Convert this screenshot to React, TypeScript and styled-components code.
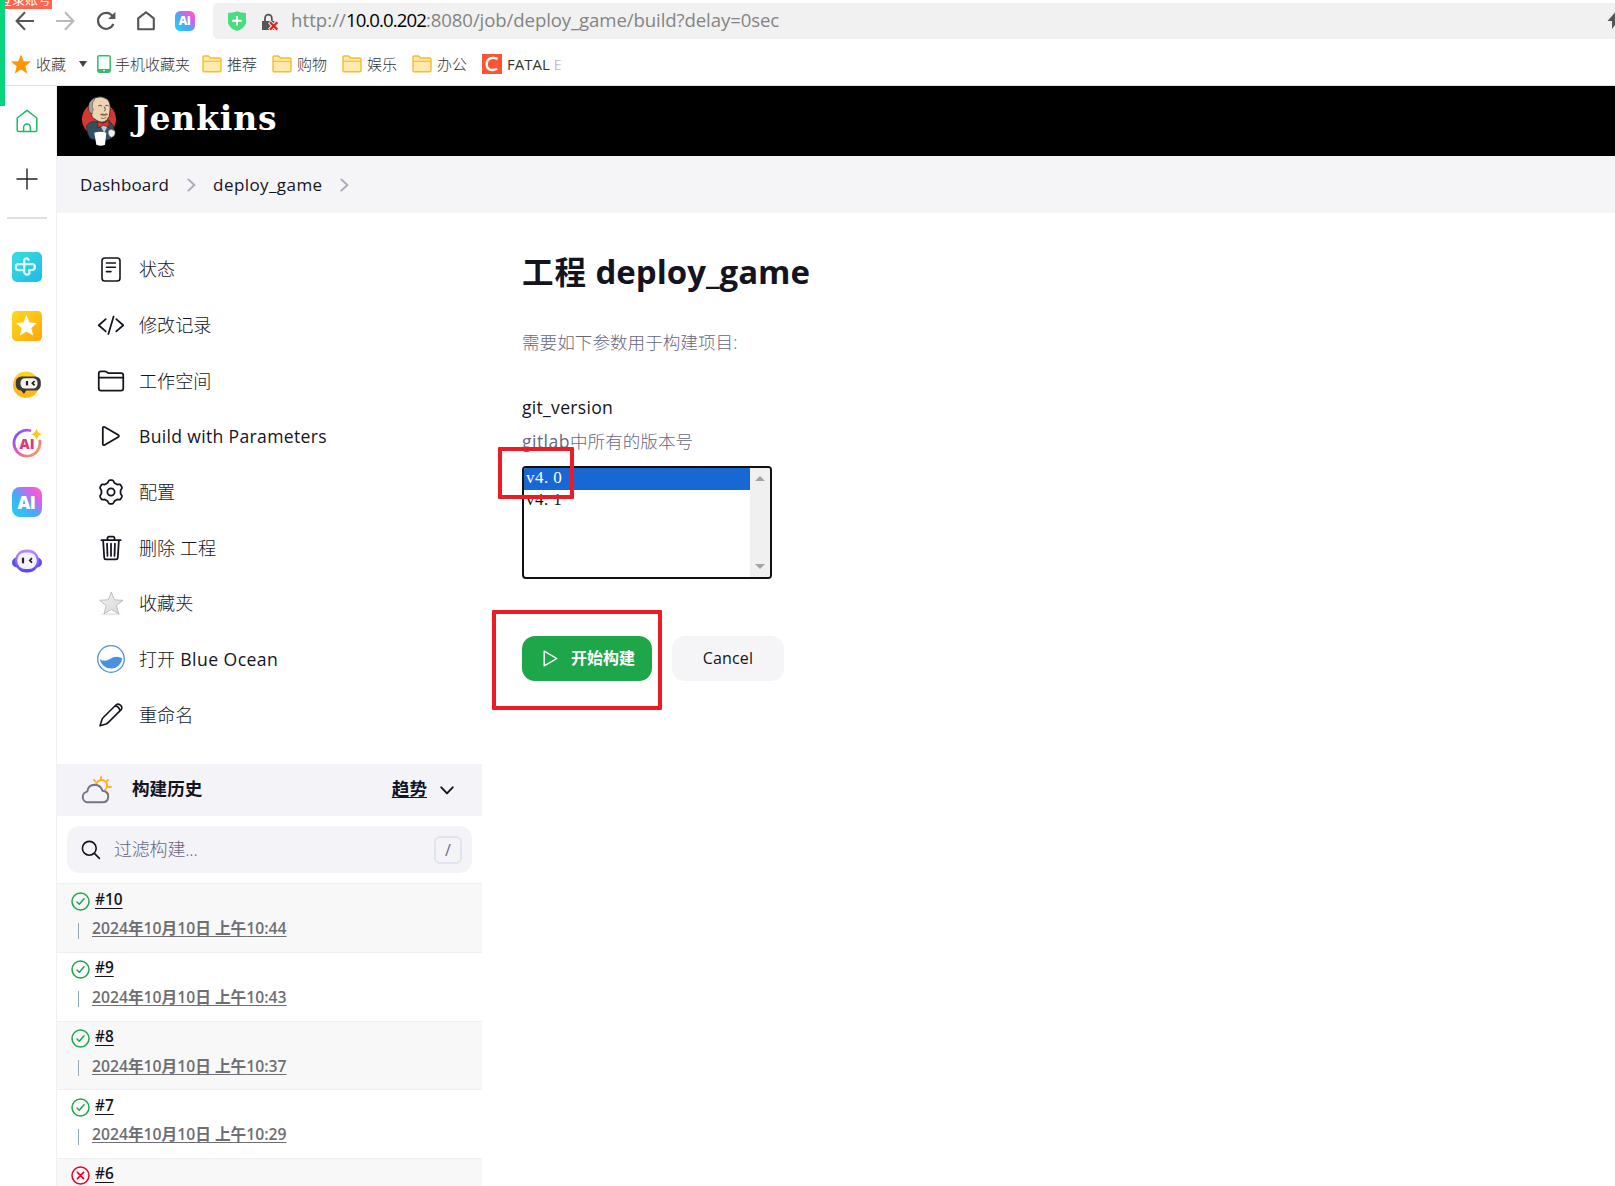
import React from 'react';
import styled, { createGlobalStyle } from 'styled-components';

const latin = '"Open Sans", "Noto Sans"';
const cjk = '"Noto Sans CJK SC"';

const Global = createGlobalStyle`
  * { box-sizing: border-box; }
  body { margin: 0; background: #fff; overflow: hidden; font-family: ${latin}, ${cjk}, sans-serif; color: #14141f; }
  svg { display: block; flex: none; }
`;

const Page = styled.div`
  position: relative;
  display: flex;
  flex-direction: column;
  width: 1615px;
  height: 1186px;
  overflow: hidden;
`;

const T = styled.span<{ $s: number; $ls?: number; $w?: number; $c?: string }>`
  font-size: ${p => p.$s}px;
  letter-spacing: ${p => p.$ls ?? 0}px;
  font-weight: ${p => p.$w ?? 'inherit'};
  color: ${p => p.$c ?? 'inherit'};
  white-space: pre;
`;

/* browser chrome */
const Strip = styled.div`
  position: absolute;
  left: 0;
  top: 0;
  width: 5px;
  height: 106px;
  background: #08d47e;
`;
const LoginTag = styled.div`
  position: absolute;
  left: 0;
  top: -12px;
  width: 52px;
  height: 21px;
  background: #ff6650;
  color: #fff;
  font: 13px/21px ${cjk}, sans-serif;
  white-space: nowrap;
  text-indent: -1px;
`;
const Toolbar = styled.div`
  display: flex;
  flex: none;
  align-items: center;
  height: 42px;
  padding-left: 14px;
`;
const NavButtons = styled.div`
  display: flex;
  align-items: center;
  gap: 18.3px;
  width: 199px;
`;
const AddressBar = styled.div`
  display: flex;
  align-items: center;
  flex: 1;
  height: 36px;
  padding-left: 14px;
  background: #f1f1f1;
  border-radius: 5px 0 0 5px;
`;
const Url = styled.div`
  margin-left: 12px;
  flex: 1;
  height: 32px;
  line-height: 30px;
  color: #848484;
  white-space: nowrap;
`;
const Bookmarks = styled.div`
  display: flex;
  flex: none;
  align-items: center;
  height: 44px;
  padding: 1px 0 0 11px;
  border-bottom: 1px solid #e0e2e4;
  color: #333;
  font-family: ${latin}, ${cjk}, sans-serif;
`;
const Bookmark = styled.div<{ $w: number; $gap?: number }>`
  display: flex;
  align-items: center;
  gap: ${p => p.$gap ?? 5}px;
  width: ${p => p.$w}px;
  font-size: 15px;
  font-weight: 300;
  line-height: 22px;
  white-space: nowrap;
`;
const Faded = styled.span`
  background: linear-gradient(90deg, #aaa, #e4e4e4);
  background-clip: text;
  color: transparent;
`;

/* rail */
const Body = styled.div`
  display: flex;
  flex: 1;
  min-height: 0;
`;
const Rail = styled.div`
  display: flex;
  flex-direction: column;
  align-items: center;
  width: 57px;
  padding: 23px 3px 0 1px;
  border-right: 1px solid #f1f1f3;
`;
const RailIcon = styled.div<{ $h: number; $mt: number }>`
  display: flex;
  flex: none;
  align-items: center;
  justify-content: center;
  width: 30px;
  height: ${p => p.$h}px;
  margin-top: ${p => p.$mt}px;
`;
const RailLine = styled.div`
  width: 40px;
  height: 2px;
  margin: 27px 0 4px;
  background: #e0e0e0;
`;

/* jenkins */
const Site = styled.div`
  display: flex;
  flex-direction: column;
  flex: 1;
`;
const Header = styled.div`
  display: flex;
  flex: none;
  align-items: center;
  height: 70px;
  padding-left: 24px;
  background: #000;
`;
const Brand = styled.div`
  margin-left: 16px;
  font: bold 33px/40px "DejaVu Serif", serif;
  letter-spacing: 0.85px;
  color: #fff;
  padding-bottom: 5px;
`;
const Crumbs = styled.div`
  display: flex;
  flex: none;
  align-items: center;
  height: 57px;
  padding-left: 23px;
  background: #f5f5f8;
  font-size: 17px;
  line-height: 24px;
`;
const Chevron = styled.div<{ $l: number; $r: number }>`
  margin: 0 ${p => p.$r}px 0 ${p => p.$l}px;
`;
const Columns = styled.div`
  display: flex;
  flex: 1;
  min-height: 0;
`;
const Side = styled.div`
  display: flex;
  flex-direction: column;
  width: 425px;
  padding-top: 28.5px;
  overflow: hidden;
  & > * { flex: none; }
`;
const Task = styled.div`
  display: flex;
  align-items: center;
  height: 55.7px;
  padding-left: 40px;
  gap: 14px;
  font-size: 18.1px;
  font-weight: 300;
  line-height: 28px;
  white-space: pre;
`;
const IconBox = styled.div`
  display: flex;
  align-items: center;
  justify-content: center;
  width: 28px;
  height: 28px;
`;
const HistoryHead = styled.div`
  display: flex;
  align-items: center;
  height: 52px;
  margin-top: 21.7px;
  padding: 0 28px 0 24px;
  background: #f3f3f8;
  font: bold 17.6px/26px ${cjk}, sans-serif;
`;
const HistoryTitle = styled.div`
  flex: 1;
  margin-left: 20px;
  padding-bottom: 4px;
`;
const Trend = styled.div`
  margin-right: 13px;
  padding-bottom: 4px;
  text-decoration: underline;
  text-decoration-thickness: 1px;
  text-underline-offset: 2px;
`;
const Search = styled.div`
  display: flex;
  align-items: center;
  height: 47px;
  margin: 10px 10px 10px;
  padding: 0 10px 0 14px;
  background: #f3f3f8;
  border-radius: 13px;
`;
const Placeholder = styled.div`
  flex: 1;
  margin-left: 13px;
  padding-bottom: 1px;
  font: 300 18px/26px ${latin}, ${cjk}, sans-serif;
  letter-spacing: -0.2px;
  color: #67677f;
`;
const Key = styled.div`
  display: flex;
  align-items: center;
  justify-content: center;
  width: 28px;
  height: 28px;
  border: 2px solid #e3e3ee;
  border-radius: 6px;
  font-size: 16px;
  color: #6a6a85;
`;
const Build = styled.div<{ $odd: boolean }>`
  display: flex;
  flex-direction: column;
  height: 68.6px;
  padding: 2.5px 0 0 14px;
  border-top: 1px solid #efefef;
  background: ${p => (p.$odd ? '#f8f8f8' : '#fff')};
`;
const BuildTop = styled.div`
  display: flex;
  align-items: center;
  gap: 5px;
  height: 29px;
`;
const Num = styled.div`
  font-size: 15.4px;
  font-weight: 600;
  line-height: 24px;
  margin-top: -3px;
  text-decoration: underline;
  text-decoration-thickness: 1px;
  text-underline-offset: 3px;
`;
const BuildDate = styled.div`
  display: flex;
  align-items: center;
  height: 25px;
  margin-left: 7px;
  font-size: 15.7px;
  font-weight: 600;
  line-height: 24px;
  color: #6e6e73;
`;
const Tick = styled.div`
  width: 1px;
  height: 16px;
  margin: 5px 13px 0 0;
  background: #93a8b8;
`;
const DateText = styled.span`
  white-space: pre;
  text-decoration: underline;
  text-decoration-thickness: 1px;
  text-underline-offset: 2px;
`;

const Main = styled.div`
  display: flex;
  flex-direction: column;
  align-items: flex-start;
  flex: 1;
  padding: 38px 0 0 40px;
`;
const Title = styled.h1`
  margin: 0;
  height: 44px;
  font-size: 31.5px;
  font-weight: 700;
  line-height: 41px;
  letter-spacing: 0.9px;
  white-space: pre;
`;
const Intro = styled.div`
  height: 28px;
  margin-top: 34px;
  font-size: 17.6px;
  font-weight: 300;
  line-height: 27px;
  color: #67677f;
`;
const Label = styled.div`
  height: 28px;
  margin-top: 36px;
  line-height: 28px;
`;
const Hint = styled.div`
  height: 28px;
  margin-top: 6px;
  line-height: 28px;
  font-weight: 300;
  color: #67677f;
`;
const SelectWrap = styled.div`
  position: relative;
  margin-top: 11px;
`;
const Select = styled.div`
  display: flex;
  width: 250px;
  height: 113px;
  border: 2px solid #111;
  border-radius: 4px;
  overflow: hidden;
`;
const Options = styled.div`
  flex: 1;
`;
const Option = styled.div<{ $on?: boolean }>`
  height: 21.5px;
  padding-left: 2px;
  font: 17px/19px "Liberation Serif", serif;
  letter-spacing: 0.45px;
  color: ${p => (p.$on ? '#fff' : '#111')};
  background: ${p => (p.$on ? '#1967d2' : 'transparent')};
`;
const Scroll = styled.div`
  display: flex;
  flex-direction: column;
  align-items: center;
  justify-content: space-between;
  width: 20px;
  padding: 8px 0 8px;
  background: #f0f0f0;
`;
const Mark = styled.div<{ $x: number; $y: number; $w: number; $h: number }>`
  position: absolute;
  left: ${p => p.$x}px;
  top: ${p => p.$y}px;
  width: ${p => p.$w}px;
  height: ${p => p.$h}px;
  border: 4px solid #ed1c24;
  border-radius: 1px;
`;
const Actions = styled.div`
  position: relative;
  display: flex;
  gap: 20px;
  margin-top: 57px;
`;
const Button = styled.div<{ $primary?: boolean }>`
  display: flex;
  align-items: center;
  justify-content: center;
  gap: 13px;
  width: ${p => (p.$primary ? 130 : 112)}px;
  height: 45px;
  padding-left: ${p => (p.$primary ? 4 : 0)}px;
  border-radius: 13px;
  background: ${p => (p.$primary ? '#1ea64b' : '#f5f5f8')};
  color: ${p => (p.$primary ? '#fff' : '#14141f')};
  font-size: 16px;
  font-weight: ${p => (p.$primary ? 700 : 400)};
  letter-spacing: ${p => (p.$primary ? 0 : 0.15)}px;
`;
const ButtonText = styled.span<{ $lift: number }>`
  padding-bottom: ${p => p.$lift}px;
`;

const L = { fill: 'none', stroke: '#14141f', strokeWidth: 32, strokeLinecap: 'round' as const, strokeLinejoin: 'round' as const };
const Ion = ({ children, s = 28 }: { children: React.ReactNode; s?: number }) => (
  <svg width={s} height={s} viewBox="0 0 512 512" {...L}>{children}</svg>
);

const AiBadge = ({ s, id }: { s: number; id: string }) => (
  <svg width={s} height={s} viewBox="0 0 30 30">
    <defs>
      <linearGradient id={id} x1="0" y1="1" x2="1" y2="0">
        <stop offset="0" stopColor="#1fd3ee" />
        <stop offset=".45" stopColor="#4ba8f5" />
        <stop offset=".75" stopColor="#e45be8" />
        <stop offset="1" stopColor="#ff6bb0" />
      </linearGradient>
    </defs>
    <rect width="30" height="30" rx="8" fill={`url(#${id})`} />
    <text x="14.5" y="21.5" textAnchor="middle" fontFamily="Open Sans" fontWeight="800" fontSize="17.5" letterSpacing="-.5" fill="#fff">AI</text>
  </svg>
);

const Folder = () => (
  <svg width="20" height="18" viewBox="0 0 20 18">
    <path d="M1 15.5V2.2Q1 1 2.2 1H6.5L8.5 3H17.8Q19 3 19 4.2V15.5Q19 16.7 17.8 16.7H2.2Q1 16.7 1 15.5Z" fill="#ffe9ac" stroke="#f7bd2b" strokeWidth="1.4" />
    <path d="M1 6.3H19" stroke="#f7bd2b" strokeWidth="1.1" />
  </svg>
);

const Butler = () => (
  <svg width="36" height="50" viewBox="0 0 108 150">
    <circle cx="54" cy="70" r="51" fill="#d33833" />
    <path d="M16 90Q30 72 50 78L85 76Q100 86 100 102L94 118L90 128Q66 138 28 128L20 112Z" fill="#335061" stroke="#1c2830" strokeWidth="2" />
    <path d="M24 42Q20 14 42 5Q62-2 78 9Q90 20 87 42Q88 62 78 72Q64 84 48 74Q30 66 30 52Z" fill="#efd4b4" stroke="#2b2320" strokeWidth="2.4" />
    <path d="M24 44Q18 14 44 5Q30 20 34 36L38 40Q32 44 34 54Q26 52 24 44Z" fill="#aaa39e" stroke="#3b3430" strokeWidth="1.5" />
    <path d="M52 30Q58 26 63 30M73 29Q79 26 83 30M70 32Q76 42 70 46" fill="none" stroke="#3a2e28" strokeWidth="2.4" />
    <path d="M56 57Q63 50 70 54Q77 50 82 56Q70 62 56 57" fill="#7d6a5c" />
    <path d="M60 66Q68 70 76 64" fill="none" stroke="#5d3328" strokeWidth="2" />
    <path d="M54 82L70 112L84 80Z" fill="#b9c8d3" />
    <path d="M50 76L66 82L84 72L84 94L68 88L50 96Z" fill="#d33833" stroke="#4a1513" strokeWidth="2" />
    <path d="M40 110Q58 104 76 110L72 146Q60 152 46 146Z" fill="#fff" />
    <path d="M82 104Q92 96 102 106Q104 120 92 124Q80 120 82 104Z" fill="#f3ece6" stroke="#666" strokeWidth="1.5" />
  </svg>
);

const StatusIcon = ({ ok }: { ok: boolean }) => (
  <svg width="19" height="19" viewBox="0 0 19 19" fill="none" stroke={ok ? '#1ea64b' : '#e6001f'} strokeWidth="1.5" strokeLinecap="round" strokeLinejoin="round">
    <circle cx="9.5" cy="9.5" r="8.5" />
    {ok ? <path d="M6 10L8.3 12.3L13 6.8" /> : <path d="M6.4 6.4L12.6 12.6M12.6 6.4L6.4 12.6" />}
  </svg>
);

/* six rounded lobes around the hub, sampled from a sine profile */
const gearPath = Array.from({ length: 72 }, (_, i) => {
  const a = (i / 72) * Math.PI * 2;
  const wave = Math.cos(6 * (a + Math.PI / 2));
  const r = 196 + 22 * Math.tanh(2.2 * wave);
  return `${i ? 'L' : 'M'}${(256 + r * Math.cos(a)).toFixed(1)} ${(256 + r * Math.sin(a)).toFixed(1)}`;
}).join('') + 'Z';

const tasks: { icon: React.ReactNode; label: React.ReactNode }[] = [
  { label: '状态', icon: <svg width="20" height="25" viewBox="0 0 20 25" fill="none" stroke="#14141f" strokeWidth="1.6" strokeLinecap="round"><rect x="1" y="1" width="18" height="23" rx="2.8" /><path d="M5.4 6H14.4M5.4 10.3H14.4M5.4 14.6H10" /></svg> },
  { label: '修改记录', icon: <Ion><path d="M160 368L32 256l128-112M352 368l128-112-128-112M304 96l-96 320" transform="translate(0 5)" /></Ion> },
  { label: '工作空间', icon: <Ion><path d="M440 432H72a40 40 0 01-40-40V120a40 40 0 0140-40h75.89a40 40 0 0122.19 6.72l27.84 18.56a40 40 0 0022.19 6.72H440a40 40 0 0140 40v240a40 40 0 01-40 40zM32 192h448" /></Ion> },
  { label: <T $s={17.6} $ls={0.32} $w={400}>Build with Parameters</T>, icon: <Ion><path d="M112 111v290c0 17.44 17 28.52 31 20.16l247.9-148.37c12.12-7.25 12.12-26.33 0-33.58L143 90.84c-14-8.36-31 2.72-31 20.16z" transform="translate(-8 0)scale(1.02 1)" /></Ion> },
  { label: '配置', icon: <Ion><circle cx="256" cy="256" r="66" /><path d={gearPath} /></Ion> },
  { label: '删除 工程', icon: <Ion><path d="M112 112l20 320c.95 18.49 14.4 32 32 32h184c17.67 0 30.87-13.51 32-32l20-320M80 112h352M192 112V72h0a23.93 23.93 0 0124-24h80a23.93 23.93 0 0124 24h0v40M256 176v224M184 176l8 224M328 176l-8 224" /></Ion> },
  { label: '收藏夹', icon: <svg width="28" height="28" viewBox="0 0 28 28"><defs><linearGradient id="st" x1="0" y1="0" x2="1" y2="1"><stop offset="0" stopColor="#f6f6f4" /><stop offset="1" stopColor="#d4d4d2" /></linearGradient></defs><ellipse cx="14" cy="25.3" rx="10" ry="1" fill="#e6e6e6" /><path d="M14.3 3L17.3 10.8L26 11.3L19.4 16.6L21.8 25L14.3 20.4L7 25L9.2 16.6L2.6 11.3L11.3 10.8Z" fill="url(#st)" stroke="#b9b9b7" strokeWidth=".9" strokeLinejoin="round" /></svg> },
  { label: <>打开<T $s={17.6} $ls={0.45} $w={400}> Blue Ocean</T></>, icon: <svg width="28" height="28" viewBox="0 0 28 28"><circle cx="14" cy="14" r="13.3" fill="#fff" stroke="#4a90e2" strokeWidth="1.3" /><path d="M2.8 14.2Q8 17.5 13 14Q19 9.8 25.2 13.2A11.3 11.3 0 012.8 14.2Z" fill="#4a90e2" /></svg> },
  { label: '重命名', icon: <svg width="24" height="24" viewBox="0 0 24 24" fill="none" stroke="#14141f" strokeWidth="1.6" strokeLinecap="round" strokeLinejoin="round"><path d="M1 22.8L3 16.6Q3.4 15.4 4.5 14.3L17.2 1.8Q19 .4 21.4 2.2Q23.8 4.4 22.2 6.6L9.4 19.4Q8.4 20.4 7 21ZM16.2 3Q20.4 3.4 20.8 7.8" /></svg> },
];

const builds: { n: string; t?: string; ok: boolean }[] = [
  { n: '#10', t: '10:44', ok: true },
  { n: '#9', t: '10:43', ok: true },
  { n: '#8', t: '10:37', ok: true },
  { n: '#7', t: '10:29', ok: true },
  { n: '#6', ok: false },
];

const CrumbArrow = () => (
  <svg width="9" height="14" viewBox="0 0 9 14" fill="none" stroke="#a9a9bd" strokeWidth="1.9" strokeLinecap="round" strokeLinejoin="round"><path d="M1.3 1.4L7.4 7L1.3 12.6" /></svg>
);

const ScrollArrow = ({ up }: { up?: boolean }) => (
  <svg width="10" height="5" viewBox="0 0 10 5"><path d={up ? 'M5 0L10 5H0Z' : 'M5 5L10 0H0Z'} fill="#a3a3a3" /></svg>
);

const Lock = styled.svg`
  margin: 3px 0 0 13px;
`;
const Caret = styled.svg`
  margin-left: 8px;
`;

export default function App() {
  return (
    <Page>
      <Global />
      <Toolbar>
        <NavButtons>
          <svg width="22" height="22" viewBox="0 0 22 22" fill="none" stroke="#555" strokeWidth="2.1"><path d="M20 11H3.5M11 2.2L2.6 11L11 19.8" /></svg>
          <svg width="22" height="22" viewBox="0 0 22 22" fill="none" stroke="#b9b9b9" strokeWidth="2.1"><path d="M2 11H18.5M11 2.2L19.4 11L11 19.8" /></svg>
          <svg width="22" height="22" viewBox="0 0 22 22" fill="none" stroke="#555" strokeWidth="2.2"><path d="M18.4 14A8 8 0 1 1 17.6 6.2" /><path d="M20.4 1.8V9H13.2Z" fill="#555" stroke="none" /></svg>
          <svg width="22" height="22" viewBox="0 0 22 22" fill="none" stroke="#555" strokeWidth="2.1" strokeLinejoin="round"><path d="M3.2 8.4L11 2.2L18.8 8.4V19.3H3.2Z" /></svg>
          <AiBadge s={20} id="aiA" />
        </NavButtons>
        <AddressBar>
          <svg width="20" height="20" viewBox="0 0 20 20"><path d="M1 2Q6 2 10 .3Q14 2 19 2V12Q18 17 10 20Q2 17 1 12Z" fill="#4bdc80" /><path d="M10 5V14.4M5.3 9.7H14.7" stroke="#fff" strokeWidth="2" /></svg>
          <Lock width="19" height="19" viewBox="0 0 19 19"><path d="M5 8V5.2A3.4 3.6 0 0 1 11.8 5.2V8" fill="none" stroke="#555" strokeWidth="1.8" /><path d="M2 8H14.5V17H2Z" fill="#555" /><path d="M9.5 8.8L17.5 17M17.5 8.8L9.5 17" stroke="#f1f1f1" strokeWidth="4" /><path d="M10 9.2L17.4 16.6M17.4 9.2L10 16.6" stroke="#d22" strokeWidth="2.2" /></Lock>
          <Url>
            <T $s={18.6} $ls={0.05}>http://</T><T $s={18.6} $ls={-0.9} $c="#000">10.0.0.202</T><T $s={18.6} $ls={-0.1}>:8080/job/deploy_game/build?delay=0sec</T>
          </Url>
          <svg width="8" height="18" viewBox="0 0 8 18"><path d="M8 .5L.5 9H5V17L8 13Z" fill="#555" /></svg>
        </AddressBar>
      </Toolbar>
      <Bookmarks>
        <Bookmark $w={86}>
          <svg width="20" height="20" viewBox="0 0 20 20"><path d="M10 .3L12.7 7.2L20 7.6L14.3 12.2L16.2 19.5L10 15.4L3.8 19.5L5.7 12.2L0 7.6L7.3 7.2Z" fill="#ff9500" /></svg>
          收藏
          <Caret width="8" height="6" viewBox="0 0 8 6"><path d="M0 0H8L4 6Z" fill="#444" /></Caret>
        </Bookmark>
        <Bookmark $w={105} $gap={4}>
          <svg width="14" height="18" viewBox="0 0 14 18"><rect x=".8" y=".8" width="12.4" height="16.4" rx="1.4" fill="#f4fff8" stroke="#3cb96a" strokeWidth="1.5" /><path d="M1 14H13V17H1Z" fill="#3cb96a" /><path d="M6 15.6H8" stroke="#fff" /></svg>
          手机收藏夹
        </Bookmark>
        {['推荐', '购物', '娱乐', '办公'].map(b => (
          <Bookmark key={b} $w={70}><Folder />{b}</Bookmark>
        ))}
        <Bookmark $w={90}>
          <svg width="20" height="20" viewBox="0 0 20 20"><rect width="20" height="20" fill="#fc5531" /><path d="M15.6 5Q12.6 3.2 9 4.2Q4.8 5.6 4.7 10.4Q4.8 15.4 9.6 16Q12.8 16.2 15 14.8" fill="none" stroke="#fff" strokeWidth="2.4" /></svg>
          <T $s={15} $ls={0} $w={400}>FATAL <Faded>E</Faded></T>
        </Bookmark>
      </Bookmarks>
      <Body>
        <Rail>
          <RailIcon $h={24} $mt={0}>
            <svg width="22" height="24" viewBox="0 0 22 24" fill="none" stroke="#1fb864" strokeWidth="1.5" strokeLinejoin="round"><path d="M1.2 9L11 1.4L20.8 9V21Q20.8 22.6 19.2 22.6H2.8Q1.2 22.6 1.2 21ZM7.6 22.6V18.4A3.4 3.4 0 0 1 14.4 18.4V22.6" /></svg>
          </RailIcon>
          <RailIcon $h={22} $mt={35}>
            <svg width="22" height="22" viewBox="0 0 22 22" stroke="#222" strokeWidth="1.4"><path d="M11 .5V21.5M.5 11H21.5" /></svg>
          </RailIcon>
          <RailLine />
          <RailIcon $h={30} $mt={29}>
            <svg width="30" height="30" viewBox="0 0 30 30"><defs><linearGradient id="tl" x1="0" y1="0" x2="1" y2="1"><stop offset="0" stopColor="#35e0dd" /><stop offset="1" stopColor="#22b8ea" /></linearGradient></defs><rect width="30" height="30" rx="5" fill="url(#tl)" /><path d="M10 18.2H6.8A3 3 0 0 1 6.8 12.2H20A2.9 2.9 0 0 1 20 18H17M12.2 12V8.2A2.3 2.3 0 0 1 16.6 7.8M12.2 12V20.5A3 3 0 0 0 17.4 21.5V18" fill="none" stroke="#e2fbff" strokeWidth="2.2" strokeLinecap="round" /></svg>
          </RailIcon>
          <RailIcon $h={30} $mt={29}>
            <svg width="30" height="30" viewBox="0 0 30 30"><defs><linearGradient id="gd" x1="0" y1="0" x2="1" y2="1"><stop offset="0" stopColor="#ffda1c" /><stop offset="1" stopColor="#ffa60a" /></linearGradient></defs><rect width="30" height="30" rx="4.5" fill="url(#gd)" /><path d="M14.5 4L17.6 11.6L25 12L19.3 17L21.2 24.6L14.5 20.4L7.8 24.6L9.7 17L4 12L11.4 11.6Z" fill="#fff" /></svg>
          </RailIcon>
          <RailIcon $h={30} $mt={29}>
            <svg width="30" height="30" viewBox="0 0 30 30"><circle cx="14" cy="15" r="13" fill="#ffb81e" /><path d="M2.4 8A13 13 0 0 1 25 8Z" fill="#ffd21c" /><path d="M8 19L12 24L15 19Z" fill="#333" /><rect x="3.8" y="6.5" width="25" height="14" rx="5.5" fill="#3b3b3b" /><rect x="8.5" y="8.3" width="17" height="10.3" rx="4.5" fill="#f5f3ee" /><path d="M15 11V15.4" stroke="#222" strokeWidth="2.2" /><path d="M22.6 11L20.4 13.2L22.6 15.4" fill="none" stroke="#222" strokeWidth="1.7" /></svg>
          </RailIcon>
          <RailIcon $h={30} $mt={28}>
            <svg width="30" height="30" viewBox="0 0 30 30"><defs><linearGradient id="rg" x1="0" y1="0" x2="1" y2="1"><stop offset="0" stopColor="#5a5cf5" /><stop offset=".4" stopColor="#d94fe0" /><stop offset="1" stopColor="#ffa63a" /></linearGradient></defs><path d="M18 2.5A13 13 0 1 0 27.8 13" fill="none" stroke="url(#rg)" strokeWidth="2.8" strokeLinecap="round" /><text x="15" y="20.5" textAnchor="middle" fontFamily="Open Sans" fontWeight="800" fontSize="14" fill="#e0357f">AI</text><path d="M24.5 .5Q25.4 5.2 30 6.3Q25.4 7.5 24.5 12Q23.4 7.5 19 6.3Q23.4 5.2 24.5 .5Z" fill="#ffc628" /></svg>
          </RailIcon>
          <RailIcon $h={30} $mt={29}><AiBadge s={30} id="aiB" /></RailIcon>
          <RailIcon $h={30} $mt={29}>
            <svg width="30" height="30" viewBox="0 0 30 30"><defs><linearGradient id="pp" x1="0" y1="0" x2="0" y2="1"><stop offset="0" stopColor="#c08cff" /><stop offset="1" stopColor="#5147f2" /></linearGradient></defs><rect x="0" y="11.5" width="30" height="10" rx="5" fill="#5a4df4" /><rect x="3" y="3.5" width="24" height="23" rx="11.3" fill="url(#pp)" /><rect x="5.2" y="6.4" width="19.6" height="16.6" rx="8" fill="#f4f2ff" /><path d="M11 12.5V16.5" stroke="#222" strokeWidth="2.2" strokeLinecap="round" /><path d="M20 12.2L17.8 14.4L20 16.6" fill="none" stroke="#222" strokeWidth="1.7" /></svg>
          </RailIcon>
        </Rail>
        <Site>
          <Header>
            <Butler />
            <Brand>Jenkins</Brand>
          </Header>
          <Crumbs>
            <T $s={17} $ls={0.15}>Dashboard</T>
            <Chevron $l={18} $r={17}><CrumbArrow /></Chevron>
            <T $s={17} $ls={0.42}>deploy_game</T>
            <Chevron $l={17} $r={0}><CrumbArrow /></Chevron>
          </Crumbs>
          <Columns>
            <Side>
              {tasks.map((t, i) => (
                <Task key={i}><IconBox>{t.icon}</IconBox><div>{t.label}</div></Task>
              ))}
              <HistoryHead>
                <svg width="31" height="28" viewBox="0 0 31 28" fill="none" strokeWidth="1.9" strokeLinecap="round" strokeLinejoin="round">
                  <path d="M15.3 7.6A5.6 5.6 0 1 1 24 14M20 1V3.2M13 4L14.3 5.3M27 4L25.6 5.4M27.6 11H30M27 17.6L26 16.8" stroke="#ffb21e" />
                  <path d="M6.5 26.3A5.4 5.4 0 0 1 6.3 15.6Q7 9 13.8 8.8Q19.6 9 21.4 14.8Q27.2 15.4 27.2 20.6Q27 26.3 21.4 26.3Z" stroke="#73738c" />
                </svg>
                <HistoryTitle>构建历史</HistoryTitle>
                <Trend>趋势</Trend>
                <svg width="14" height="9" viewBox="0 0 14 9" fill="none" stroke="#14141f" strokeWidth="1.9" strokeLinecap="round" strokeLinejoin="round"><path d="M1.3 1.3L7 7.4L12.7 1.3" /></svg>
              </HistoryHead>
              <Search>
                <svg width="20" height="20" viewBox="0 0 20 20" fill="none" stroke="#14141f" strokeWidth="1.6" strokeLinecap="round"><circle cx="8.3" cy="8.3" r="6.9" /><path d="M13.4 13.4L18.4 18.4" /></svg>
                <Placeholder>过滤构建...</Placeholder>
                <Key>/</Key>
              </Search>
              {builds.map((b, i) => (
                <Build key={b.n} $odd={i % 2 === 0}>
                  <BuildTop><StatusIcon ok={b.ok} /><Num>{b.n}</Num></BuildTop>
                  {b.t && <BuildDate><Tick /><DateText>2024年10月10日 上午{b.t}</DateText></BuildDate>}
                </Build>
              ))}
            </Side>
            <Main>
              <Title>工程<T $s={33} $w={700} $ls={0}> deploy_game</T></Title>
              <Intro>需要如下参数用于构建项目:</Intro>
              <Label><T $s={17.6} $ls={0.28}>git_version</T></Label>
              <Hint><T $s={17.6} $w={400} $ls={0.45}>gitlab</T><T $s={17.6}>中所有的版本号</T></Hint>
              <SelectWrap>
                <Select>
                  <Options>
                    <Option $on>v4. 0</Option>
                    <Option>v4. 1</Option>
                  </Options>
                  <Scroll><ScrollArrow up /><ScrollArrow /></Scroll>
                </Select>
                <Mark $x={-24} $y={-19} $w={76} $h={52} />
              </SelectWrap>
              <Actions>
                <Button $primary>
                  <svg width="15" height="17" viewBox="0 0 15 17" fill="none" stroke="#fff" strokeWidth="1.4" strokeLinejoin="round"><path d="M1.2 1.2L13.8 8.5L1.2 15.8Z" /></svg>
                  <ButtonText $lift={4}>开始构建</ButtonText>
                </Button>
                <Button><ButtonText $lift={2}>Cancel</ButtonText></Button>
                <Mark $x={-30} $y={-26} $w={170} $h={100} />
              </Actions>
            </Main>
          </Columns>
        </Site>
      </Body>
      <LoginTag>登录账号</LoginTag>
      <Strip />
    </Page>
  );
}
